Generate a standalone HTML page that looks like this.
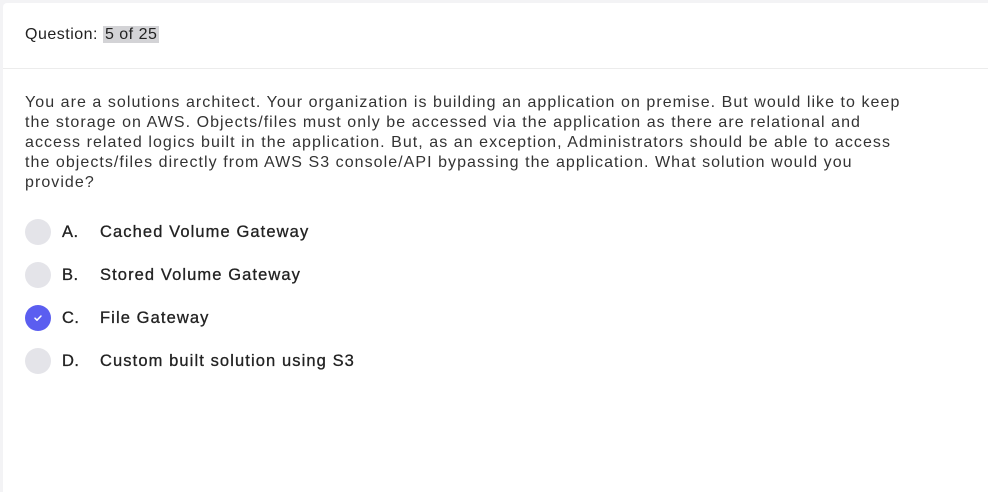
<!DOCTYPE html>
<html><head><style>
body{margin:0;background:#f3f3f5;width:988px;height:492px;overflow:hidden;font-family:"Liberation Sans",sans-serif;color:#222;}
.card{position:absolute;left:3px;top:3px;right:0;bottom:0;background:#fff;border-radius:4px 0 0 0;}
.hdr{height:65px;border-bottom:1px solid #ececec;position:relative;}
.hdr span.t{position:absolute;left:22px;top:23px;font-size:16px;letter-spacing:0.5px;}
.hl{background:#d3d3d6;padding:0 2px;}
.q{position:absolute;left:22px;top:90px;font-size:16px;line-height:20px;color:#333;letter-spacing:1.05px;white-space:nowrap;}
.opt{position:absolute;left:22px;height:26px;display:flex;align-items:center;font-size:16.5px;color:#222;letter-spacing:1.1px;-webkit-text-stroke:0.3px #222;}
.c{width:26px;height:26px;border-radius:50%;background:#e4e4e9;}
.c.on{background:#5b5ef0;display:flex;align-items:center;justify-content:center;}
.l{position:absolute;left:37px;letter-spacing:0.5px;}
.x{position:absolute;left:75px;white-space:nowrap;}
</style></head><body>
<div class="card">
<div class="hdr"><span class="t">Question: <span class="hl">5 of 25</span></span></div>
<div class="q">You are a solutions architect. Your organization is building an application on premise. But would like to keep<br>the storage on AWS. Objects/files must only be accessed via the application as there are relational and<br>access related logics built in the application. But, as an exception, Administrators should be able to access<br>the objects/files directly from AWS S3 console/API bypassing the application. What solution would you<br>provide?</div>
<div class="opt" style="top:216px"><div class="c"></div><span class="l">A.</span><span class="x">Cached Volume Gateway</span></div>
<div class="opt" style="top:259px"><div class="c"></div><span class="l">B.</span><span class="x">Stored Volume Gateway</span></div>
<div class="opt" style="top:302px"><div class="c on"><svg width="12" height="12" viewBox="0 0 12 12"><path d="M3 6.2l2 2 4-4.2" stroke="#fff" stroke-width="1.5" fill="none" stroke-linecap="round" stroke-linejoin="round"/></svg></div><span class="l">C.</span><span class="x">File Gateway</span></div>
<div class="opt" style="top:345px"><div class="c"></div><span class="l">D.</span><span class="x">Custom built solution using S3</span></div>
</div>
</body></html>
